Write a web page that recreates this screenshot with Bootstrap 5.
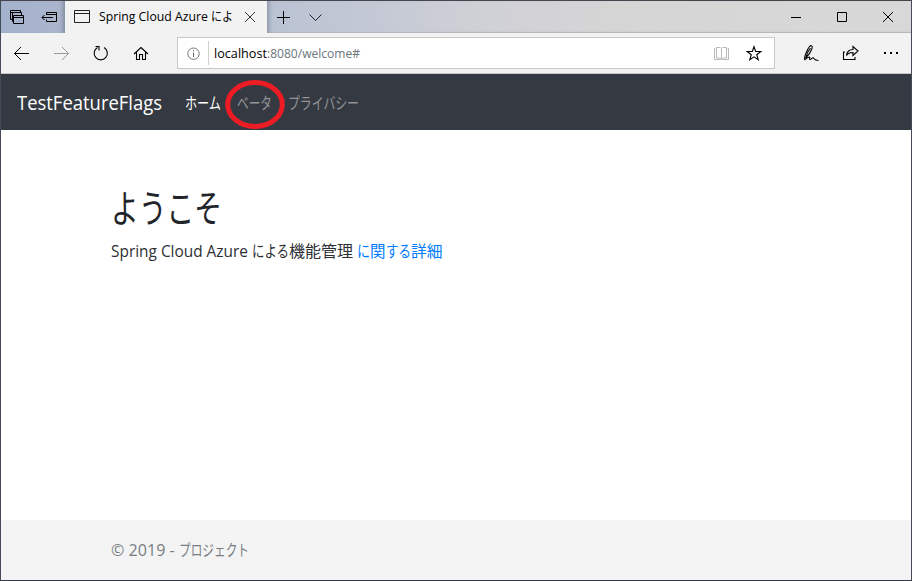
<!DOCTYPE html>
<html lang="ja">
<head>
<meta charset="utf-8">
<title>Spring Cloud Azure による機能管理</title>
<link href="https://cdn.jsdelivr.net/npm/bootstrap@5.3.0/dist/css/bootstrap.min.css" rel="stylesheet">
<style>
html,body{height:100%;overflow:hidden}
body{font-family:"Open Sans","Noto Sans CJK JP",sans-serif;background:#fff;color:#212529}
.window-frame{height:581px;border:1px solid #454b59;border-top-color:#46474e;border-bottom-color:#353846}
.title-strip{height:32px;background:linear-gradient(90deg,#a5b2cd 0,#abb6cd 65px,#bac3d3 270px,#c5cad5 390px,#cfd0d6 470px,#d5d5d6 600px,#d8d8d8 100%)}
.set-aside{width:64px;box-shadow:inset -5px 0 4px -3px #7e899e}
.page-tab{width:202px;background:#f2f2f2;font-size:12.5px;color:#000}
.after-tab{box-shadow:inset 5px 0 4px -3px #8b94a4,inset 0 -2px 1px -1px #b4b7bf}
.tool-strip{height:41px;background:#f2f2f2;border-bottom:1px solid #c5c5c5}
.address{width:598px;height:32px;border:1px solid #c8c8c8;background:#fff;margin-left:25px;font-size:13px;color:#000}
.address-text{padding:2px 0 0 5px}
.divider{width:1px;height:24px;background:#d0d0d0}
.site-nav{height:56px;background:#353a42}
.brand-name{font-size:19.5px;color:#fff;line-height:30px;padding-top:2px}
.site-nav a{text-decoration:none}
.menu-text{font-size:16px;line-height:24px;color:#929498;padding-top:2px}
.menu-text.current{color:#fff;padding-left:23px}
.fit{display:inline-block;white-space:nowrap;transform-origin:0 50%}
.ring{position:absolute;left:223px;top:4px}
.indent{padding-left:110px}
.welcome{font-size:38px;line-height:44px;font-weight:400;padding-top:55px}
.detail{font-size:15.5px;line-height:24px;margin-top:10px;color:#2c3034}
.detail a{color:#007bff;text-decoration:none}
.site-foot{height:60px;background:#f4f4f4;color:#777d82;font-size:15.5px;padding-top:2px}
svg{display:block;flex:none;fill:none;stroke:#000;stroke-width:1}
</style>
<script src="https://cdn.jsdelivr.net/npm/bootstrap@5.3.0/dist/js/bootstrap.bundle.min.js"></script>
</head>
<body>
<div class="window-frame d-flex flex-column">
  <div class="title-strip d-flex flex-shrink-0">
    <div class="set-aside flex-shrink-0">
      <svg width="64" height="32" viewBox="1 1 64 32"><path d="M12.500 19.500h-2v-9h10v2M13.500 21.500h-1v-9h9v3M10.500 12.500h9M13.500 15.500h10v8h-10zM13.500 17.500h10"/><path d="M46.500 15v-2.500h10v9h-10v-2M46.500 14.500h10M53 17.500H42M44.500 15l-2.500 2.500 2.500 2.500"/></svg>
    </div>
    <div class="page-tab d-flex align-items-center flex-shrink-0">
      <svg width="34" height="32" viewBox="65 1 34 32"><path d="M74.500 10.500h15v12h-15zM74.500 13.500h15" stroke="#222"/></svg>
      <span class="fit" data-w="112">Spring Cloud Azure&nbsp;</span><span class="fit" data-w="22">によ</span>
      <svg class="ms-auto" width="34" height="32" viewBox="233 1 34 32"><path d="M245 12l10 10M255 12l-10 10" stroke="#333"/></svg>
    </div>
    <div class="after-tab d-flex flex-grow-1 justify-content-between">
      <svg width="63" height="32" viewBox="267 1 63 32"><path d="M277 17.500h13M283.500 11v13"/><path d="M309.500 14.500l6 6 6-6" stroke="#222"/></svg>
      <svg width="141" height="32" viewBox="770 1 141 32"><path d="M791 17.500h10M837.500 12.500h9v9h-9zM883 12l10 10M893 12l-10 10"/></svg>
    </div>
  </div>
  <div class="tool-strip d-flex align-items-center flex-shrink-0">
    <svg width="151" height="40" viewBox="1 33 151 40"><path d="M29 53.500H14.500M21 47l-6.500 6.500L21 60"/><path d="M54 53.500h14.500M62 47l6.500 6.500-6.500 6.500" stroke="#999"/><path d="M97.500 47.500a6.600 6.600 0 1 0 6.500 0M95.500 46.500h3.500v4" stroke-width="1.100"/><path d="M134 54l7-6.500 7 6.500M136.500 52v7.500h3v-5h3v5h3V52" stroke-width="1.100"/></svg>
    <div class="address d-flex align-items-center flex-shrink-0">
      <svg width="30" height="30" viewBox="178 38 30 30"><circle cx="193.500" cy="53.700" r="5.700" stroke="#777"/><path d="M193.500 52.500v4.500M193.500 50v1.200" stroke="#666"/></svg>
      <span class="divider"></span>
      <span class="address-text d-flex"><span class="fit" data-w="53">localhost</span><span class="fit text-secondary" data-w="93">:8080/welcome#</span></span>
      <svg class="ms-auto" width="74" height="30" viewBox="700 38 74 30"><path d="M715.500 48.500h-1v11h6.500l.5.500.5-.5h6.500v-11h-1M716.500 47.500h4l1 1 1-1h4v10.500h-4l-1 1-1-1h-4zM721.500 48.500v10.500" stroke="#b8b8b8"/><path d="M754 46.700l1.700 4.800h5.100l-4.100 3.200 1.500 5-4.200-2.900-4.200 2.900 1.500-5-4.100-3.200h5.100z" stroke-width="1.100"/></svg>
    </div>
    <svg class="ms-auto" width="131" height="40" viewBox="780 33 131 40"><path d="M804.500 59.500C804 57 807.500 49 809.500 46.500c1.500-1.800 3.500-.5 2.500 2-1.200 3.500-4 7.500-6.500 9.500M810.500 48c-2.500 3-4 7-4.500 9.500M804.500 60c1.500-1.500 3.500-3 5-3 1 .5-.8 2.500.5 2.500s2-2 3.200-1.700c1 .3.500 2.700 5.300 2.700" stroke-width="1.100"/><path d="M845 52h-1.500v7.500h11.500v-2.500M846.500 55.500c.5-4 3-6 6.500-6v-3l5 4.500-5 4.500v-3c-3 0-5 .5-6.500 3z" stroke-width="1.100"/><path d="M884 52h2v2h-2zM890 52h2v2h-2zM896 52h2v2h-2z" fill="#000" stroke="none"/></svg>
  </div>
  <nav class="site-nav d-flex align-items-center position-relative flex-shrink-0 ps-3">
    <a class="brand-name" href="#"><span class="fit" data-w="145">TestFeatureFlags</span></a>
    <a class="menu-text current" href="#"><span class="fit" data-w="36">ホーム</span></a>
    <a class="menu-text ps-3" href="#"><span class="fit" data-w="35">ベータ</span></a>
    <a class="menu-text ps-3" href="#"><span class="fit" data-w="71">プライバシー</span></a>
    <svg class="ring" width="62" height="52" viewBox="0 0 62 52"><ellipse cx="31" cy="26.500" rx="27.300" ry="22" stroke="#ed1c24" stroke-width="5"/></svg>
  </nav>
  <main class="flex-grow-1 indent">
    <h1 class="welcome mb-0"><span class="fit" data-w="111">ようこそ</span></h1>
    <p class="detail mb-0 d-flex"><span class="fit" data-w="141">Spring Cloud Azure&nbsp;</span><span class="fit" data-w="37">による</span><span class="fit" data-w="64">機能管理</span><a class="d-flex ms-1" href="#"><span class="fit" data-w="13">に</span><span class="fit" data-w="15.5">関</span><span class="fit" data-w="25">する</span><span class="fit" data-w="31.5">詳細</span></a></p>
  </main>
  <footer class="site-foot indent d-flex align-items-center flex-shrink-0"><span class="fit" data-w="68">© 2019 -&nbsp;</span><span class="fit" data-w="70">プロジェクト</span></footer>
</div>
<script>
// Condense each run of text to the width given in data-w
document.querySelectorAll('.fit').forEach(function(el){
  var natural = el.getBoundingClientRect().width, w = +el.dataset.w;
  el.style.width = w + 'px';
  el.style.transform = 'scaleX(' + w / natural + ')';
});
</script>
</body>
</html>
